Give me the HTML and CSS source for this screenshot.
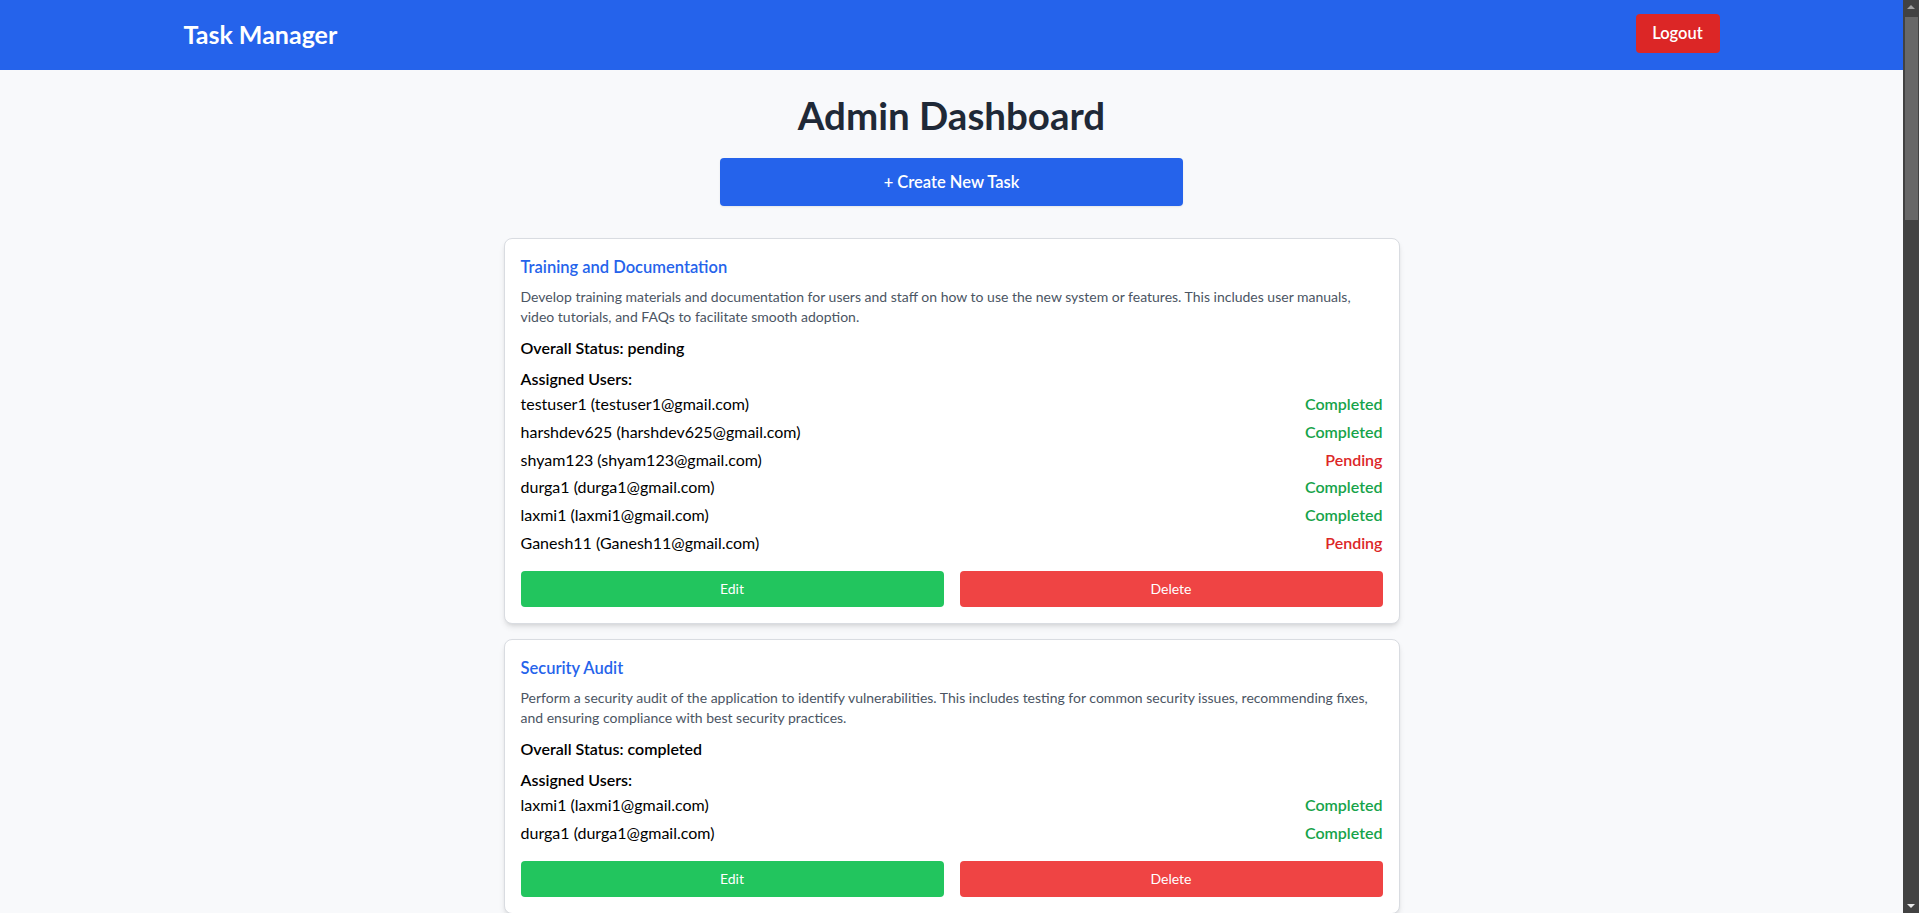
FILE: index.html
```html
<!DOCTYPE html>
<html lang="en">
<head>
<meta charset="utf-8">
<title>Task Manager</title>
<link rel="stylesheet" href="styles.css">
</head>
<body>
<header class="topbar">
  <div class="container topbar-inner">
    <div class="brand">Task Manager</div>
    <button class="btn-logout">Logout</button>
  </div>
</header>
<main class="main">
  <h1 class="page-title">Admin Dashboard</h1>
  <button class="btn-create">+ Create New Task</button>

  <div class="task-list">
    <section class="card">
      <h2 class="card-title">Training and Documentation</h2>
      <p class="card-desc">Develop training materials and documentation for users and staff on how to use the new system or features. This includes user manuals, video tutorials, and FAQs to facilitate smooth adoption.</p>
      <p class="card-status">Overall Status: pending</p>
      <h3 class="assigned-title">Assigned Users:</h3>
      <ul class="user-list">
        <li class="user-row"><span>testuser1 (testuser1@gmail.com)</span><span class="st st-done">Completed</span></li>
        <li class="user-row"><span>harshdev625 (harshdev625@gmail.com)</span><span class="st st-done">Completed</span></li>
        <li class="user-row"><span>shyam123 (shyam123@gmail.com)</span><span class="st st-pending">Pending</span></li>
        <li class="user-row"><span>durga1 (durga1@gmail.com)</span><span class="st st-done">Completed</span></li>
        <li class="user-row"><span>laxmi1 (laxmi1@gmail.com)</span><span class="st st-done">Completed</span></li>
        <li class="user-row"><span>Ganesh11 (Ganesh11@gmail.com)</span><span class="st st-pending">Pending</span></li>
      </ul>
      <div class="card-actions">
        <button class="btn-edit">Edit</button>
        <button class="btn-delete">Delete</button>
      </div>
    </section>

    <section class="card">
      <h2 class="card-title">Security Audit</h2>
      <p class="card-desc">Perform a security audit of the application to identify vulnerabilities. This includes testing for common security issues, recommending fixes, and ensuring compliance with best security practices.</p>
      <p class="card-status">Overall Status: completed</p>
      <h3 class="assigned-title">Assigned Users:</h3>
      <ul class="user-list">
        <li class="user-row"><span>laxmi1 (laxmi1@gmail.com)</span><span class="st st-done">Completed</span></li>
        <li class="user-row"><span>durga1 (durga1@gmail.com)</span><span class="st st-done">Completed</span></li>
      </ul>
      <div class="card-actions">
        <button class="btn-edit">Edit</button>
        <button class="btn-delete">Delete</button>
      </div>
    </section>

    <section class="card">
      <h2 class="card-title">Performance Optimization</h2>
      <p class="card-desc">Analyze and improve the performance of the application, including page load times, database queries and API response times.</p>
      <p class="card-status">Overall Status: pending</p>
      <h3 class="assigned-title">Assigned Users:</h3>
      <ul class="user-list">
        <li class="user-row"><span>shyam123 (shyam123@gmail.com)</span><span class="st st-pending">Pending</span></li>
        <li class="user-row"><span>testuser1 (testuser1@gmail.com)</span><span class="st st-done">Completed</span></li>
      </ul>
      <div class="card-actions">
        <button class="btn-edit">Edit</button>
        <button class="btn-delete">Delete</button>
      </div>
    </section>
  </div>
</main>

<div class="scrollbar" aria-hidden="true">
  <span class="sb-arrow sb-up"></span>
  <span class="sb-thumb"></span>
  <span class="sb-arrow sb-down"></span>
</div>
</body>
</html>
```
FILE: styles.css
```css
* { box-sizing: border-box; }

html, body {
  margin: 0;
  padding: 0;
}

body {
  font-family: "Segoe UI", Lato, "Noto Sans", sans-serif;
  background: #f8f9fb;
  color: #000;
  min-height: 100vh;
  padding-right: 16px;
}

button {
  font-family: inherit;
  border: none;
  cursor: pointer;
  color: #fff;
}

/* fake classic scrollbar overlay */
.scrollbar {
  position: fixed;
  top: 0;
  right: 0;
  width: 16px;
  height: 100vh;
  background: #424242;
}

.sb-thumb {
  position: absolute;
  top: 17px;
  left: 2px;
  right: 1px;
  height: 203px;
  background: #686868;
}

.sb-arrow {
  position: absolute;
  left: 4px;
  width: 0;
  height: 0;
  border-left: 4px solid transparent;
  border-right: 4px solid transparent;
}

.sb-up {
  top: 5px;
  border-bottom: 4px solid #a0a0a0;
}

.sb-down {
  bottom: 5px;
  border-top: 4px solid #e8e8e8;
}

.container {
  max-width: 1536px;
  margin: 0 auto;
}

.topbar {
  background: #2563eb;
  padding: 14px 0 17px;
}

.topbar-inner {
  display: flex;
  align-items: center;
  justify-content: space-between;
}

.brand {
  color: #fff;
  font-size: 25px;
  font-weight: 700;
  line-height: 32px;
}

.btn-logout {
  background: #dc2626;
  font-size: 16.5px;
  font-weight: 600;
  line-height: 23px;
  padding: 8px 0;
  width: 84px;
  border-radius: 4px;
}

.main {
  padding: 25px 0 40px;
  display: flex;
  flex-direction: column;
  align-items: center;
}

.page-title {
  margin: 0 0 23px;
  font-size: 38.5px;
  line-height: 40px;
  font-weight: 700;
  color: #1f2937;
}

.btn-create {
  width: 463px;
  height: 48px;
  background: #2563eb;
  font-size: 16.5px;
  font-weight: 600;
  border-radius: 4px;
  margin-bottom: 32px;
  box-shadow: 0 1px 2px rgba(0,0,0,0.08);
}

.task-list {
  width: 896px;
  display: flex;
  flex-direction: column;
  gap: 15px;
}

.card {
  background: #fff;
  border: 1px solid #d9dce1;
  border-radius: 8px;
  padding: 16px;
  box-shadow: 0 4px 6px -1px rgba(0,0,0,0.1), 0 2px 4px -2px rgba(0,0,0,0.1);
}

.card-title {
  margin: 0 0 8px;
  font-size: 16.5px;
  line-height: 24px;
  font-weight: 600;
  color: #2563eb;
}

.card-desc {
  margin: 0 0 9px;
  font-size: 14px;
  line-height: 20px;
  color: #4b5563;
}

.card-status {
  margin: 0 0 7px;
  font-size: 16px;
  line-height: 24px;
  font-weight: 600;
}

.assigned-title {
  margin: 0 0 1px;
  font-size: 16px;
  line-height: 24px;
  font-weight: 600;
}

.user-list {
  list-style: none;
  margin: 0;
  padding: 0;
}

.user-row {
  display: flex;
  justify-content: space-between;
  font-size: 16px;
  line-height: 24px;
  margin-bottom: 3.8px;
}

.st { font-weight: 600; }
.st-done { color: #16a34a; }
.st-pending { color: #dc2626; }

.card-actions {
  display: grid;
  grid-template-columns: 1fr 1fr;
  gap: 16px;
  margin-top: 16px;
}

.btn-edit,
.btn-delete {
  height: 36px;
  font-size: 14px;
  border-radius: 4px;
}

.btn-edit { background: #22c55e; }
.btn-delete { background: #ef4444; }
```
